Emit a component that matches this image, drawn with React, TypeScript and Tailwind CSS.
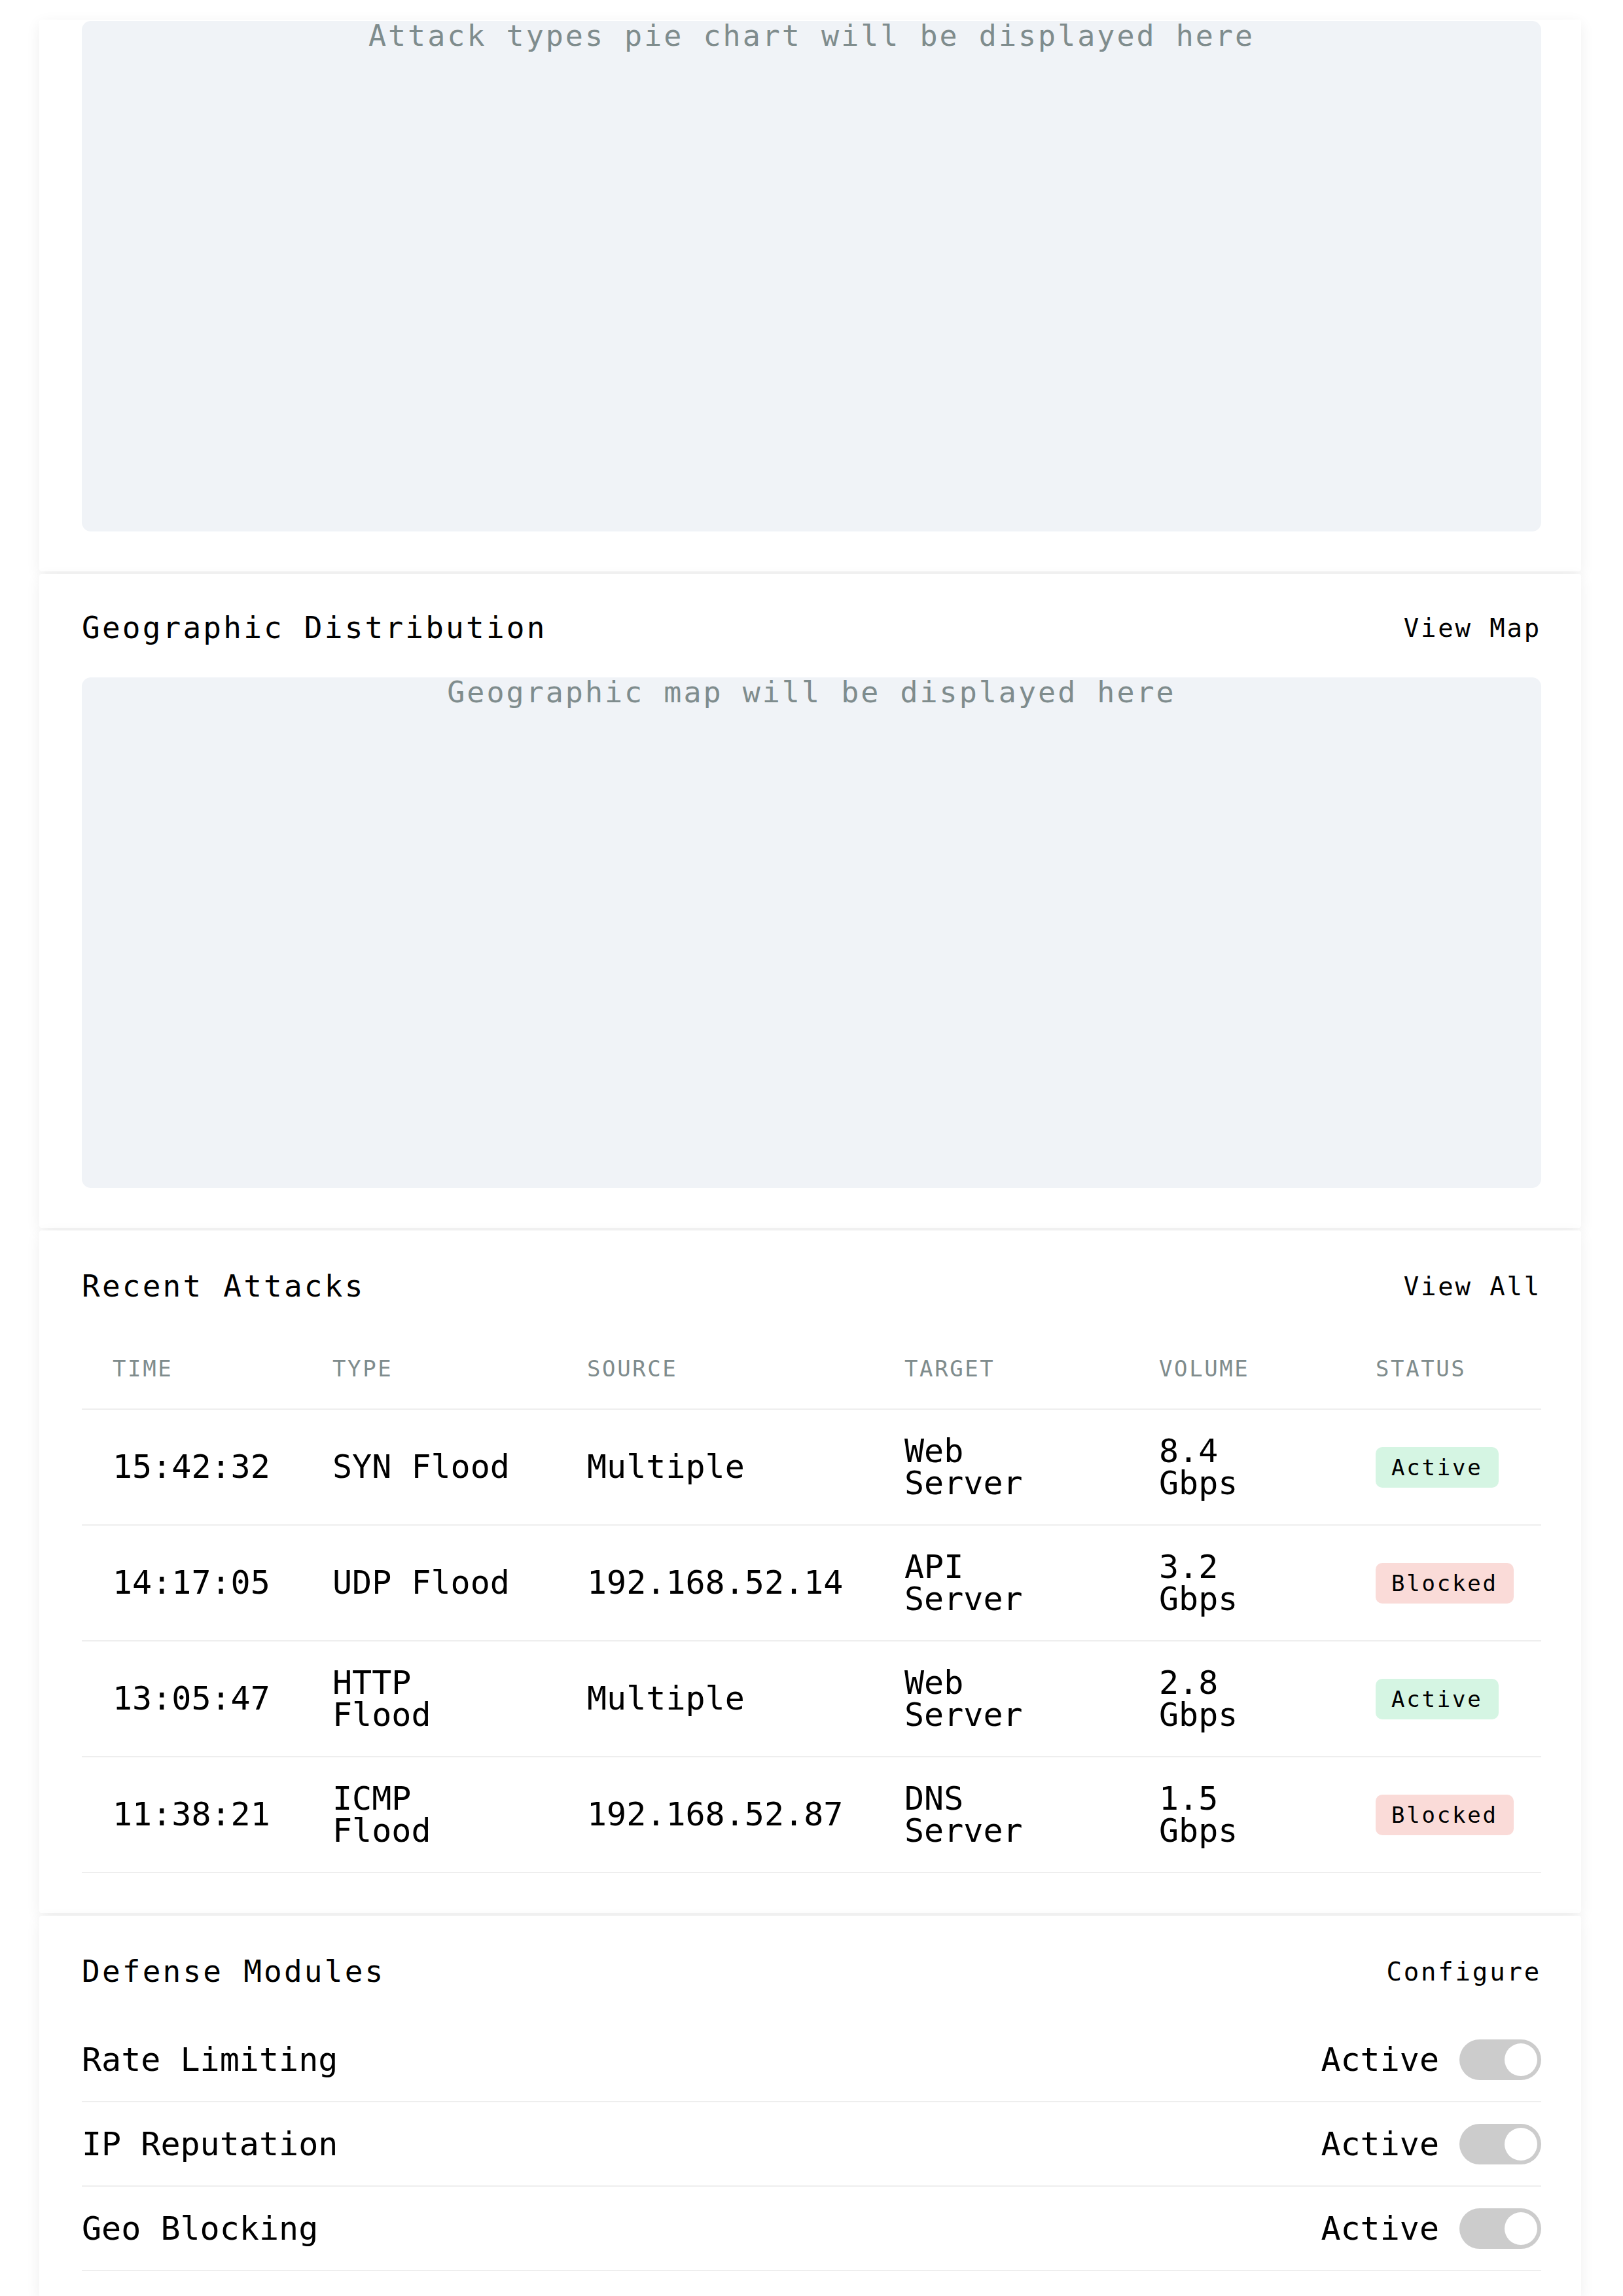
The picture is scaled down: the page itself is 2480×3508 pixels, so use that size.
import React from 'react';

const attacks = [
  { time: '15:42:32', type: 'SYN Flood', source: 'Multiple', target: 'Web Server', volume: '8.4 Gbps', status: 'Active' },
  { time: '14:17:05', type: 'UDP Flood', source: '192.168.52.14', target: 'API Server', volume: '3.2 Gbps', status: 'Blocked' },
  { time: '13:05:47', type: 'HTTP Flood', source: 'Multiple', target: 'Web Server', volume: '2.8 Gbps', status: 'Active' },
  { time: '11:38:21', type: 'ICMP Flood', source: '192.168.52.87', target: 'DNS Server', volume: '1.5 Gbps', status: 'Blocked' },
];

const modules = ['Rate Limiting', 'IP Reputation', 'Geo Blocking'];

const Card: React.FC<{ className?: string; children: React.ReactNode }> = ({ className = '', children }) => (
  <section className={`bg-white rounded-[4px] shadow-[0_6px_22px_rgba(0,0,0,0.07)] pl-[65px] pr-[61px] ${className}`}>
    {children}
  </section>
);

const CardHeader: React.FC<{ title: string; action: string }> = ({ title, action }) => (
  <div className="flex items-center justify-between h-[66px]">
    <h2 className="text-[46px] leading-none tracking-[3.2px] text-black">{title}</h2>
    <button className="text-[39px] leading-none tracking-[2.8px] text-black">{action}</button>
  </div>
);

// chart placeholders: text sits at the very top of the box
const Placeholder: React.FC<{ text: string }> = ({ text }) => (
  <div className="h-[780px] rounded-[14px] bg-[#f0f3f7] text-center">
    <p className="text-[45px] leading-none tracking-[3px] text-[#7f8c8d]">{text}</p>
  </div>
);

const Badge: React.FC<{ status: string }> = ({ status }) => (
  <span
    className={`inline-block rounded-[10px] px-[24px] py-[12px] text-[34px] leading-[38px] tracking-[2.8px] text-black ${
      status === 'Active' ? 'bg-[#d5f5e3]' : 'bg-[#fadbd8]'
    }`}
  >
    {status}
  </span>
);

const Toggle: React.FC = () => (
  <span className="relative inline-block w-[125px] h-[62px] rounded-full bg-[#cccccc]">
    <span className="absolute right-[6px] top-[6px] w-[50px] h-[50px] rounded-full bg-white" />
  </span>
);

export default function App() {
  const cell = 'px-[47px] align-middle text-[50px] leading-[49px]';
  return (
    <div className="min-h-screen bg-white pl-[60px] pr-[64px] pt-[30px] font-['DejaVu_Sans_Mono',monospace] text-black">
      <div className="flex flex-col gap-[4px]">
        <Card className="pt-[2px] pb-[61px]">
          <Placeholder text="Attack types pie chart will be displayed here" />
        </Card>

        <Card className="pt-[49px] pb-[61px]">
          <CardHeader title="Geographic Distribution" action="View Map" />
          <div className="mt-[43px]">
            <Placeholder text="Geographic map will be displayed here" />
          </div>
        </Card>

        <Card className="pt-[52px] pb-[61px]">
          <CardHeader title="Recent Attacks" action="View All" />
          <table className="mt-[33px] w-full table-fixed border-collapse text-left">
            <colgroup>
              <col className="w-[336px]" />
              <col className="w-[389px]" />
              <col className="w-[485px]" />
              <col className="w-[389px]" />
              <col className="w-[331px]" />
              <col className="w-[300px]" />
            </colgroup>
            <thead>
              <tr className="border-b-2 border-[#eeeeee]">
                {['Time', 'Type', 'Source', 'Target', 'Volume', 'Status'].map((h) => (
                  <th key={h} className="h-[122px] px-[47px] align-middle text-[34px] font-normal uppercase tracking-[2.6px] text-[#7f8c8d]">
                    {h}
                  </th>
                ))}
              </tr>
            </thead>
            <tbody>
              {attacks.map((a) => (
                <tr key={a.time} className="border-b-2 border-[#eeeeee]">
                  <td className={`h-[177px] ${cell}`}>{a.time}</td>
                  <td className={cell}>{a.type}</td>
                  <td className={`${cell} whitespace-nowrap`}>{a.source}</td>
                  <td className={cell}>{a.target}</td>
                  <td className={cell}>{a.volume}</td>
                  <td className="px-[47px] align-middle">
                    <Badge status={a.status} />
                  </td>
                </tr>
              ))}
            </tbody>
          </table>
        </Card>

        <Card className="pt-[52px] pb-[40px]">
          <CardHeader title="Defense Modules" action="Configure" />
          <div className="mt-[38px]">
            {modules.map((m) => (
              <div key={m} className="flex items-center justify-between h-[129px] border-b-2 border-[#eeeeee]">
                <span className="text-[50px] leading-none">{m}</span>
                <div className="flex items-center gap-[31px]">
                  <span className="text-[50px] leading-none">Active</span>
                  <Toggle />
                </div>
              </div>
            ))}
          </div>
        </Card>
      </div>
    </div>
  );
}
